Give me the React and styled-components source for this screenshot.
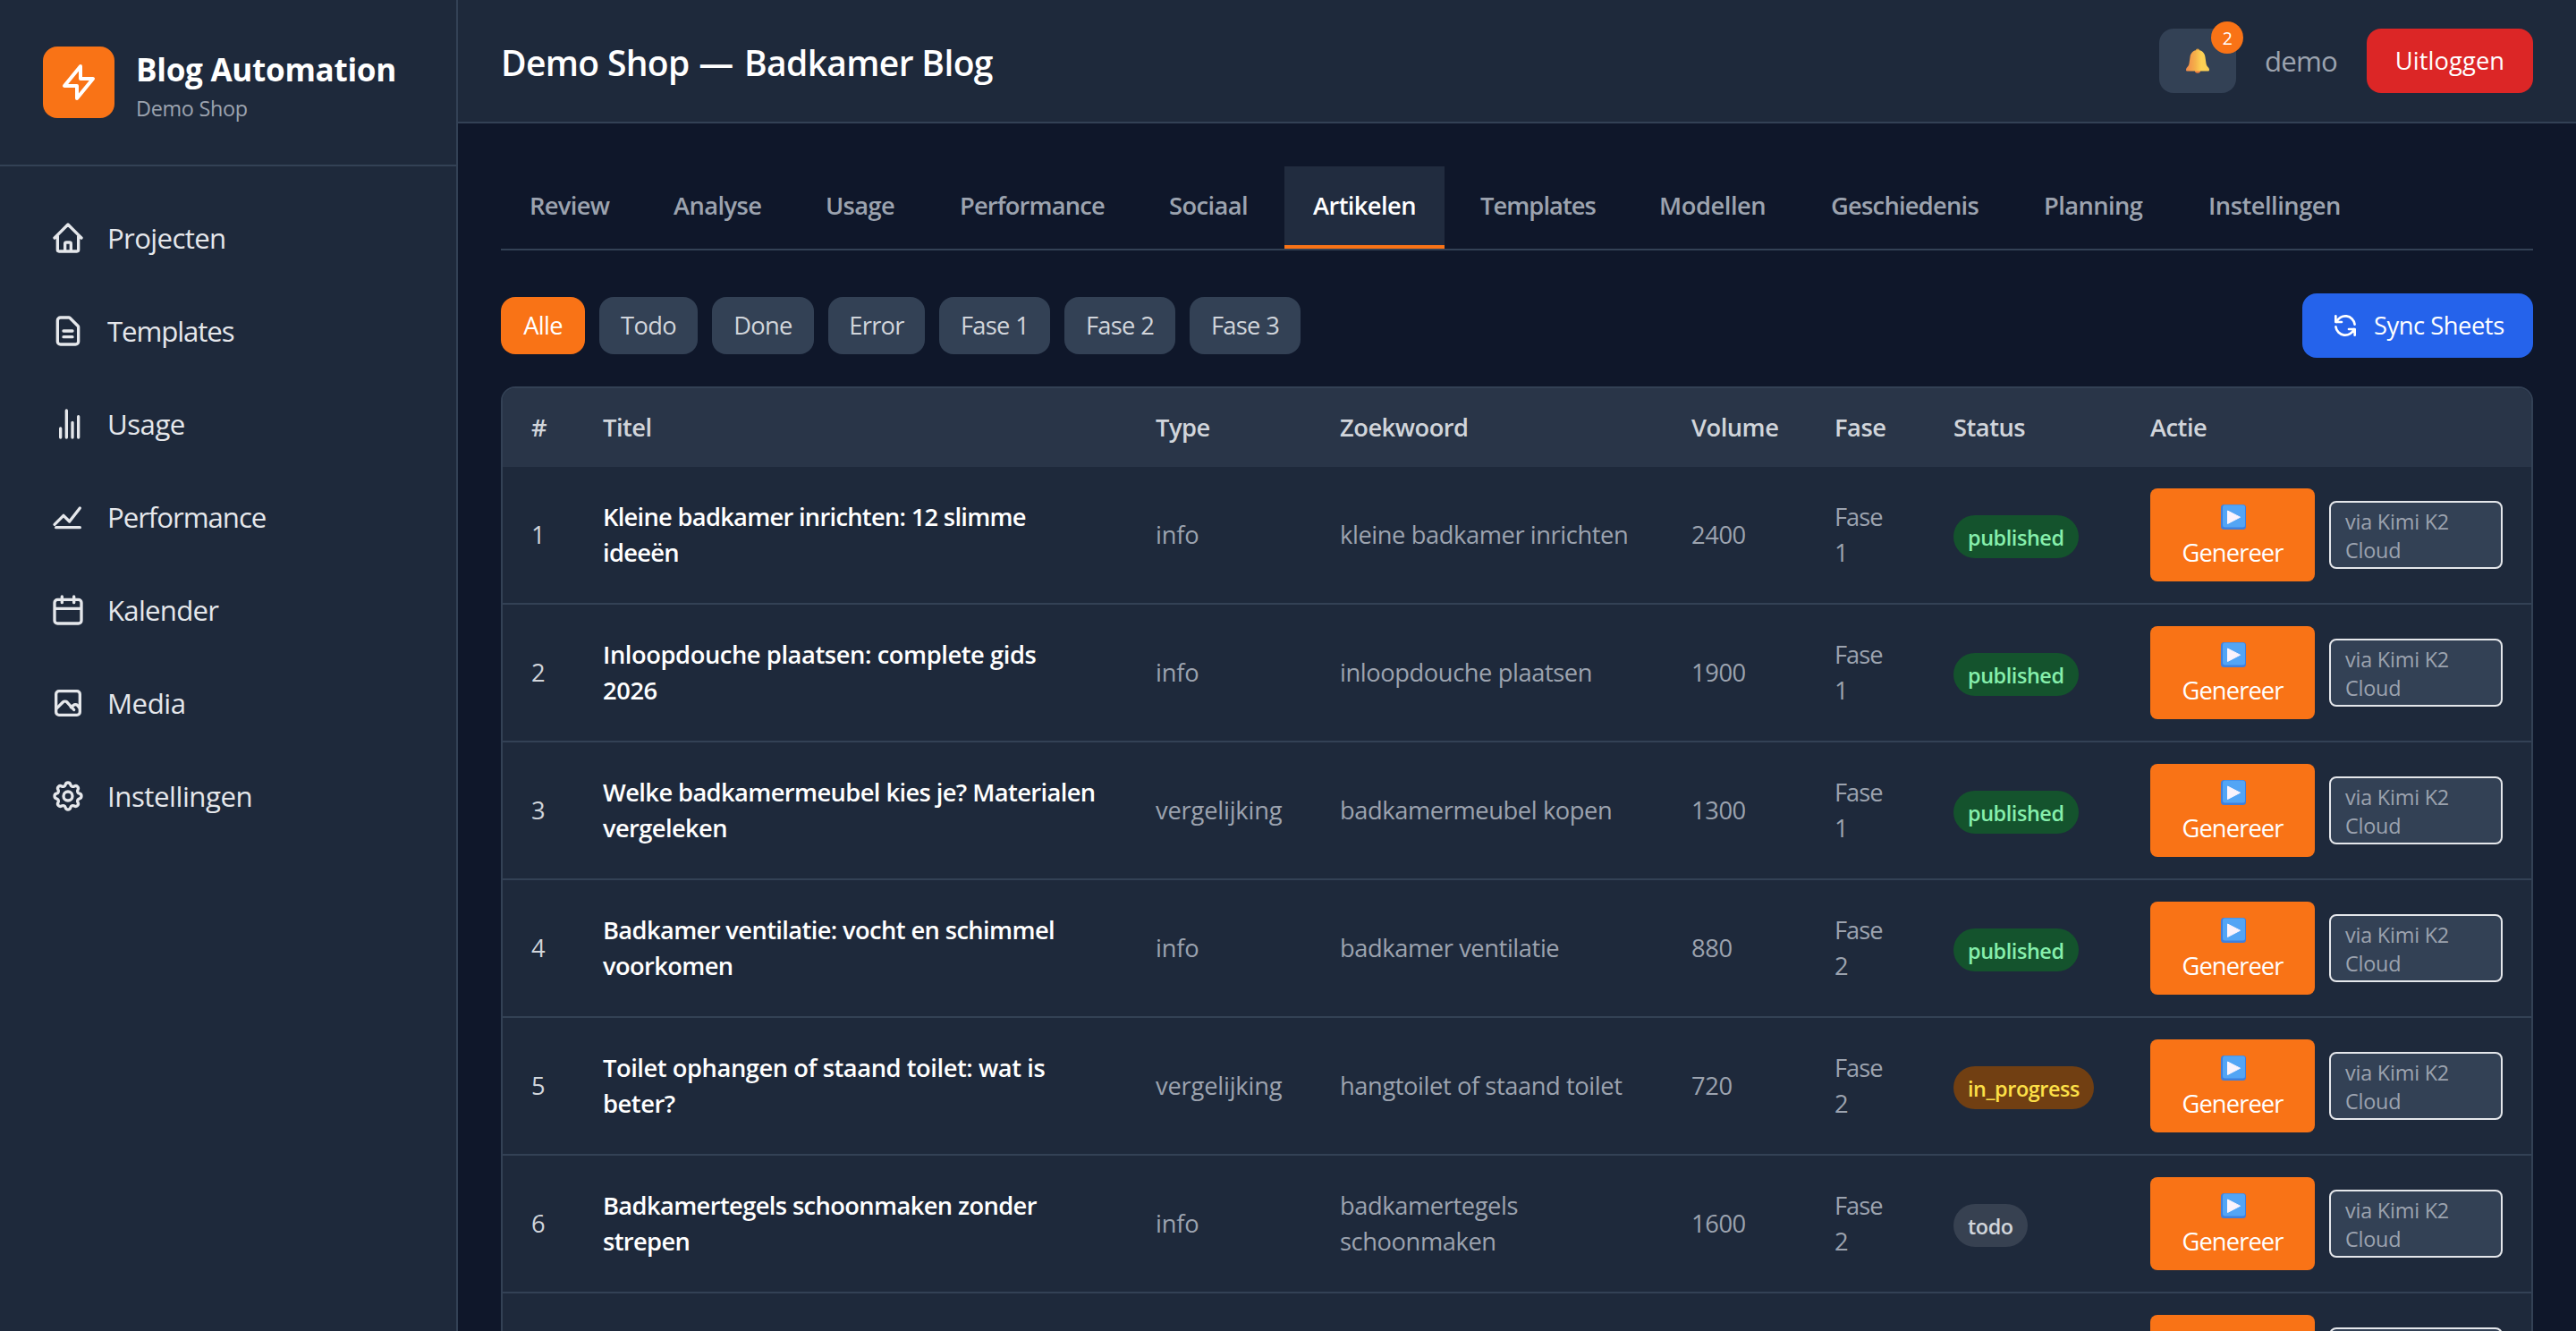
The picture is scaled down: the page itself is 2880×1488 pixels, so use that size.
import React, { useState } from 'react';
import styled, { createGlobalStyle } from 'styled-components';

const GlobalStyle = createGlobalStyle`
  * {
    box-sizing: border-box;
  }

  body {
    margin: 0;
    background: #0f172a;
    color: #e5e7eb;
    font-family: 'Open Sans', 'Noto Sans', sans-serif;
    font-size: 27.3px;
    line-height: 40px;
    letter-spacing: -0.02em;
    overflow: hidden;
  }

  button {
    font: inherit;
    letter-spacing: inherit;
    border: none;
    padding: 0;
    cursor: pointer;
  }
`;

// Layout
const Layout = styled.div`
  display: flex;
  width: 100%;
  height: 1488px;
  overflow: hidden;
`;

const Sidebar = styled.aside`
  flex: 0 0 512px;
  background: #1e293b;
  border-right: 2px solid #334155;
`;

const Content = styled.div`
  flex: 1;
  min-width: 0;
`;

const Main = styled.main`
  padding: 48px;
`;

// Sidebar
const Brand = styled.div`
  display: flex;
  align-items: center;
  gap: 24px;
  height: 186px;
  padding: 0 48px;
  border-bottom: 2px solid #334155;
`;

const Logo = styled.div`
  display: flex;
  align-items: center;
  justify-content: center;
  width: 80px;
  height: 80px;
  border-radius: 16px;
  background: #f97316;
  color: #fff;
`;

const BrandName = styled.h1`
  margin: 0;
  padding-top: 2px;
  font-size: 35.1px;
  line-height: 56px;
  font-weight: 700;
  letter-spacing: -0.3px;
  color: #fff;
  white-space: nowrap;
`;

const BrandSub = styled.p`
  margin: 0;
  font-size: 23.4px;
  line-height: 32px;
  letter-spacing: -0.3px;
  color: #9ca3af;
`;

const Nav = styled.nav`
  display: flex;
  flex-direction: column;
  gap: 8px;
  padding: 32px;
`;

const NavItem = styled.a`
  display: flex;
  align-items: center;
  gap: 24px;
  padding: 24px;
  font-size: 31.2px;
  line-height: 48px;
  letter-spacing: ${({ $tracking }) => $tracking}px;
  color: #e5e7eb;
  cursor: pointer;
`;

const Svg = styled.svg`
  flex: none;
  width: ${({ $size }) => $size}px;
  height: ${({ $size }) => $size}px;
  fill: none;
  stroke: currentColor;
  stroke-width: 2;
  stroke-linecap: round;
  stroke-linejoin: round;
`;

// Topbar
const Topbar = styled.header`
  display: flex;
  align-items: center;
  justify-content: space-between;
  height: 138px;
  padding: 0 48px;
  background: #1e293b;
  border-bottom: 2px solid #334155;
`;

const PageTitle = styled.h2`
  margin: 0;
  padding-top: 3px;
  font-size: 39px;
  line-height: 56px;
  font-weight: 600;
  letter-spacing: -0.65px;
  color: #fff;
`;

const Dash = styled.span`
  margin: 0 3px 0 1px;
`;

const TopActions = styled.div`
  display: flex;
  align-items: center;
  gap: 32px;
`;

const BellButton = styled.button`
  position: relative;
  display: flex;
  align-items: center;
  justify-content: center;
  width: 86px;
  height: 72px;
  border-radius: 16px;
  background: #334155;
`;

const BellBadge = styled.span`
  position: absolute;
  top: -8px;
  right: -8px;
  width: 36px;
  height: 36px;
  padding-top: 1px;
  border-radius: 50%;
  background: #f97316;
  color: #fff;
  font-size: 19.5px;
  line-height: 36px;
  text-align: center;
`;

const UserName = styled.span`
  width: 82px;
  font-size: 31.2px;
  line-height: 48px;
  letter-spacing: -0.8px;
  color: #9ca3af;
`;

const LogoutButton = styled.button`
  width: 186px;
  height: 72px;
  border-radius: 16px;
  background: #dc2626;
  color: #fff;
  letter-spacing: 0.1px;
`;

// Tabs
const Tabs = styled.div`
  display: flex;
  gap: 8px;
  border-bottom: 2px solid #334155;
`;

const Tab = styled.button`
  width: ${({ $width }) => $width}px;
  height: 92px;
  padding-left: 32px;
  border-bottom: 4px solid ${({ $active }) => ($active ? '#f97316' : 'transparent')};
  background: ${({ $active }) => ($active ? '#212c3f' : 'transparent')};
  color: ${({ $active }) => ($active ? '#fff' : '#9ca3af')};
  font-weight: 600;
  letter-spacing: ${({ $tracking }) => $tracking}px;
  text-align: left;
  white-space: nowrap;
`;

// Toolbar
const Toolbar = styled.div`
  display: flex;
  align-items: center;
  justify-content: space-between;
  margin: 48px 0 32px;
`;

const Filters = styled.div`
  display: flex;
  gap: 16px;
`;

const FilterButton = styled.button`
  width: ${({ $width }) => $width}px;
  height: 64px;
  border-radius: 16px;
  background: ${({ $active }) => ($active ? '#f97316' : '#334155')};
  color: ${({ $active }) => ($active ? '#fff' : '#d1d5db')};
  letter-spacing: -0.7px;
`;

const SyncButton = styled.button`
  display: flex;
  align-items: center;
  gap: 16px;
  width: 258px;
  height: 72px;
  padding: 0 32px;
  border-radius: 16px;
  background: #2563eb;
  color: #fff;
  letter-spacing: -0.45px;
  white-space: nowrap;
`;

// Table
const Card = styled.div`
  border: 2px solid #334155;
  border-radius: 16px;
  background: #1e293b;
  overflow: hidden;
`;

const Table = styled.table`
  width: 100%;
  table-layout: fixed;
  border-collapse: separate;
  border-spacing: 0;
`;

const Th = styled.th`
  width: ${({ $width }) => ($width ? `${$width}px` : 'auto')};
  height: 88px;
  padding: 24px 32px;
  background: #293548;
  color: #d1d5db;
  font-weight: 600;
  letter-spacing: -0.5px;
  text-align: left;
`;

const Td = styled.td`
  height: 154px;
  padding: 0 32px;
  border-bottom: 2px solid #334155;
  color: ${({ $color }) => $color || '#9ca3af'};
  font-weight: ${({ $bold }) => ($bold ? 600 : 400)};
  letter-spacing: ${({ $tracking = -0.42 }) => $tracking}px;
  white-space: pre;
  vertical-align: middle;
`;

const statusColors = {
  published: { bg: '#14532d', fg: '#86efac' },
  in_progress: { bg: '#713f12', fg: '#fde047' },
  todo: { bg: '#374151', fg: '#d1d5db' },
};

const StatusPill = styled.span`
  display: block;
  width: fit-content;
  margin-top: 4px;
  padding: 9px 16px 7px;
  border-radius: 24px;
  background: ${({ $status }) => statusColors[$status].bg};
  color: ${({ $status }) => statusColors[$status].fg};
  font-size: 23.4px;
  line-height: 32px;
  font-weight: 600;
  letter-spacing: -0.42px;
`;

const Actions = styled.div`
  display: flex;
  align-items: center;
  gap: 16px;
`;

const GenerateButton = styled.button`
  display: flex;
  flex-direction: column;
  align-items: center;
  width: 184px;
  height: 104px;
  padding: 12px 0;
  border-radius: 8px;
  background: #f97316;
  color: #fff;
  letter-spacing: -0.9px;
`;

const PlayIcon = styled.svg`
  width: 28px;
  height: 28px;
  margin: 6px 0 6px 2px;
`;

const ModelBox = styled.div`
  width: 194px;
  height: 76px;
  padding: 5px 16px 3px;
  border: 2px solid #e5e7eb;
  border-radius: 8px;
  background: #334155;
  color: #9ca3af;
  font-size: 23.4px;
  line-height: 32px;
  letter-spacing: -0.2px;
`;

const icons = {
  bolt: ['M13 10V3L4 14h7v7l9-11h-7z'],
  home: [
    'M3 12l2-2m0 0l7-7 7 7M5 10v10a1 1 0 001 1h3m10-11l2 2m-2-2v10a1 1 0 01-1 1h-3m-6 0a1 1 0 001-1v-4a1 1 0 011-1h2a1 1 0 011 1v4a1 1 0 001 1m-6 0h6',
  ],
  document: [
    'M9 12h6m-6 4h6m2 5H7a2 2 0 01-2-2V5a2 2 0 012-2h5.586a1 1 0 01.707.293l5.414 5.414a1 1 0 01.293.707V19a2 2 0 01-2 2z',
  ],
  bars: ['M7 21v-6M11 21V3M15 21V11M19 21V7'],
  line: ['M3 17l6-6 4 4 7-9', 'M4 19h16'],
  calendar: ['M8 7V3m8 4V3M3 11h18M5 21h14a2 2 0 002-2V7a2 2 0 00-2-2H5a2 2 0 00-2 2v12a2 2 0 002 2z'],
  image: [
    'M4 16l4.586-4.586a2 2 0 012.828 0L16 16.5',
    'M14 14.8l1.586-1.2a2 2 0 012.828 0L20 15.5',
    'M6 20h12a2 2 0 002-2V6a2 2 0 00-2-2H6a2 2 0 00-2 2v12a2 2 0 002 2z',
  ],
  cog: [
    'M10.325 4.317c.426-1.756 2.924-1.756 3.35 0a1.724 1.724 0 002.573 1.066c1.543-.94 3.31.826 2.37 2.37a1.724 1.724 0 001.065 2.572c1.756.426 1.756 2.924 0 3.35a1.724 1.724 0 00-1.066 2.573c.94 1.543-.826 3.31-2.37 2.37a1.724 1.724 0 00-2.572 1.065c-.426 1.756-2.924 1.756-3.35 0a1.724 1.724 0 00-2.573-1.066c-1.543.94-3.31-.826-2.37-2.37a1.724 1.724 0 00-1.065-2.572c-1.756-.426-1.756-2.924 0-3.35a1.724 1.724 0 001.066-2.573c-.94-1.543.826-3.31 2.37-2.37.996.608 2.296.07 2.572-1.065z',
    'M15 12a3 3 0 11-6 0 3 3 0 016 0z',
  ],
  refresh: [
    'M4 4v5h.582m15.356 2A8.001 8.001 0 004.582 9m0 0H9m11 11v-5h-.581m0 0a8.003 8.003 0 01-15.357-2m15.357 2H15',
  ],
};

const Icon = ({ name, size = 40 }) => (
  <Svg $size={size} viewBox="0 0 24 24">
    {icons[name].map((d) => (
      <path key={d} d={d} />
    ))}
  </Svg>
);

const Bell = () => (
  <svg width="26" height="28" viewBox="0 0 26 28">
    <defs>
      <linearGradient id="bell" x1="0" y1="0" x2="1" y2="0">
        <stop offset="0" stopColor="#f0894a" />
        <stop offset="0.4" stopColor="#f5b04a" />
        <stop offset="0.65" stopColor="#fdd154" />
        <stop offset="1" stopColor="#f9cf55" />
      </linearGradient>
    </defs>
    <circle cx="13" cy="2.6" r="2.2" fill="#e0a040" />
    <circle cx="13" cy="24.5" r="3.2" fill="#f0803c" />
    <path
      d="M13 2c5 0 8 3.500 8.500 8l1 7c.3 2 1.200 3 2.500 4.500.8 1 1 1.500 1 2.500 0 1-.6 1.500-1.500 1.500h-23C.6 25.500 0 25 0 24c0-1 .3-1.600 1-2.500C2.300 20 3.200 19 3.500 17l1-7C5 5.500 8 2 13 2z"
      fill="url(#bell)"
    />
  </svg>
);

const Play = () => (
  <PlayIcon viewBox="0 0 28 28">
    <rect width="28" height="28" rx="3.500" fill="#3f7fdc" />
    <rect x="2" y="0.500" width="25" height="25" rx="2.500" fill="#53a5f5" />
    <path d="M7.500 7v14.500L21.500 14.200z" fill="#faf3fc" stroke="#faf3fc" strokeLinejoin="round" />
  </PlayIcon>
);

const navItems = [
  { label: 'Projecten', icon: 'home', tracking: -0.65 },
  { label: 'Templates', icon: 'document', tracking: -1.1 },
  { label: 'Usage', icon: 'bars', tracking: -0.5 },
  { label: 'Performance', icon: 'line', tracking: -1.05 },
  { label: 'Kalender', icon: 'calendar', tracking: -0.75 },
  { label: 'Media', icon: 'image', tracking: -0.45 },
  { label: 'Instellingen', icon: 'cog', tracking: -0.45 },
];

// label, width, letter spacing
const tabs = [
  ['Review', 153, -0.65],
  ['Analyse', 162, -0.6],
  ['Usage', 142, -0.65],
  ['Performance', 226, -0.85],
  ['Sociaal', 153, -0.6],
  ['Artikelen', 179, -0.6],
  ['Templates', 192, -0.95],
  ['Modellen', 184, -0.45],
  ['Geschiedenis', 230, -0.75],
  ['Planning', 176, -0.6],
  ['Instellingen', 212, -0.5],
];

const filters = [
  ['Alle', 94],
  ['Todo', 110],
  ['Done', 114],
  ['Error', 108],
  ['Fase 1', 124],
  ['Fase 2', 124],
  ['Fase 3', 124],
];

const columns = [
  ['#', 80],
  ['Titel', 618],
  ['Type', 206],
  ['Zoekwoord', 393],
  ['Volume', 160],
  ['Fase', 133],
  ['Status', 220],
  ['Actie'],
];

const articles = [
  { id: 1, titel: 'Kleine badkamer inrichten: 12 slimme\nideeën', tracking: -0.72, type: 'info', zoekwoord: 'kleine badkamer inrichten', volume: 2400, fase: 1, status: 'published' },
  { id: 2, titel: 'Inloopdouche plaatsen: complete gids\n2026', tracking: -0.42, type: 'info', zoekwoord: 'inloopdouche plaatsen', volume: 1900, fase: 1, status: 'published' },
  { id: 3, titel: 'Welke badkamermeubel kies je? Materialen\nvergeleken', tracking: -0.6, type: 'vergelijking', zoekwoord: 'badkamermeubel kopen', volume: 1300, fase: 1, status: 'published' },
  { id: 4, titel: 'Badkamer ventilatie: vocht en schimmel\nvoorkomen', tracking: -0.62, type: 'info', zoekwoord: 'badkamer ventilatie', volume: 880, fase: 2, status: 'published' },
  { id: 5, titel: 'Toilet ophangen of staand toilet: wat is\nbeter?', tracking: -0.44, type: 'vergelijking', zoekwoord: 'hangtoilet of staand toilet', volume: 720, fase: 2, status: 'in_progress' },
  { id: 6, titel: 'Badkamertegels schoonmaken zonder\nstrepen', tracking: -0.62, type: 'info', zoekwoord: 'badkamertegels\nschoonmaken', volume: 1600, fase: 2, status: 'todo' },
  { id: 7 },
];

const ArticleRow = ({ article }) => (
  <tr>
    <Td $color="#d1d5db">{article.titel && article.id}</Td>
    <Td $color="#fff" $bold $tracking={article.tracking}>{article.titel}</Td>
    <Td $tracking={-0.2}>{article.type}</Td>
    <Td>{article.zoekwoord}</Td>
    <Td>{article.volume}</Td>
    <Td $tracking={-1}>{article.fase && `Fase\n${article.fase}`}</Td>
    <Td>{article.status && <StatusPill $status={article.status}>{article.status}</StatusPill>}</Td>
    <Td>
      <Actions>
        <GenerateButton>
          <Play />
          {article.titel && 'Genereer'}
        </GenerateButton>
        <ModelBox>{article.titel && 'via Kimi K2\nCloud'}</ModelBox>
      </Actions>
    </Td>
  </tr>
);

const App = () => {
  const [activeTab, setActiveTab] = useState('Artikelen');
  const [activeFilter, setActiveFilter] = useState('Alle');

  return (
    <>
      <GlobalStyle />
      <Layout>
        <Sidebar>
          <Brand>
            <Logo>
              <Icon name="bolt" size={48} />
            </Logo>
            <div>
              <BrandName>Blog Automation</BrandName>
              <BrandSub>Demo Shop</BrandSub>
            </div>
          </Brand>
          <Nav>
            {navItems.map((item) => (
              <NavItem key={item.label} $tracking={item.tracking}>
                <Icon name={item.icon} />
                {item.label}
              </NavItem>
            ))}
          </Nav>
        </Sidebar>
        <Content>
          <Topbar>
            <PageTitle>
              Demo Shop <Dash>—</Dash> Badkamer Blog
            </PageTitle>
            <TopActions>
              <BellButton>
                <Bell />
                <BellBadge>2</BellBadge>
              </BellButton>
              <UserName>demo</UserName>
              <LogoutButton>Uitloggen</LogoutButton>
            </TopActions>
          </Topbar>
          <Main>
            <Tabs>
              {tabs.map(([label, width, tracking]) => (
                <Tab
                  key={label}
                  $width={width}
                  $tracking={tracking}
                  $active={label === activeTab}
                  onClick={() => setActiveTab(label)}
                >
                  {label}
                </Tab>
              ))}
            </Tabs>
            <Toolbar>
              <Filters>
                {filters.map(([label, width]) => (
                  <FilterButton
                    key={label}
                    $width={width}
                    $active={label === activeFilter}
                    onClick={() => setActiveFilter(label)}
                  >
                    {label}
                  </FilterButton>
                ))}
              </Filters>
              <SyncButton>
                <Icon name="refresh" size={32} />
                Sync Sheets
              </SyncButton>
            </Toolbar>
            <Card>
              <Table>
                <thead>
                  <tr>
                    {columns.map(([label, width]) => (
                      <Th key={label} $width={width}>{label}</Th>
                    ))}
                  </tr>
                </thead>
                <tbody>
                  {articles.map((article) => (
                    <ArticleRow key={article.id} article={article} />
                  ))}
                </tbody>
              </Table>
            </Card>
          </Main>
        </Content>
      </Layout>
    </>
  );
};

export default App;
